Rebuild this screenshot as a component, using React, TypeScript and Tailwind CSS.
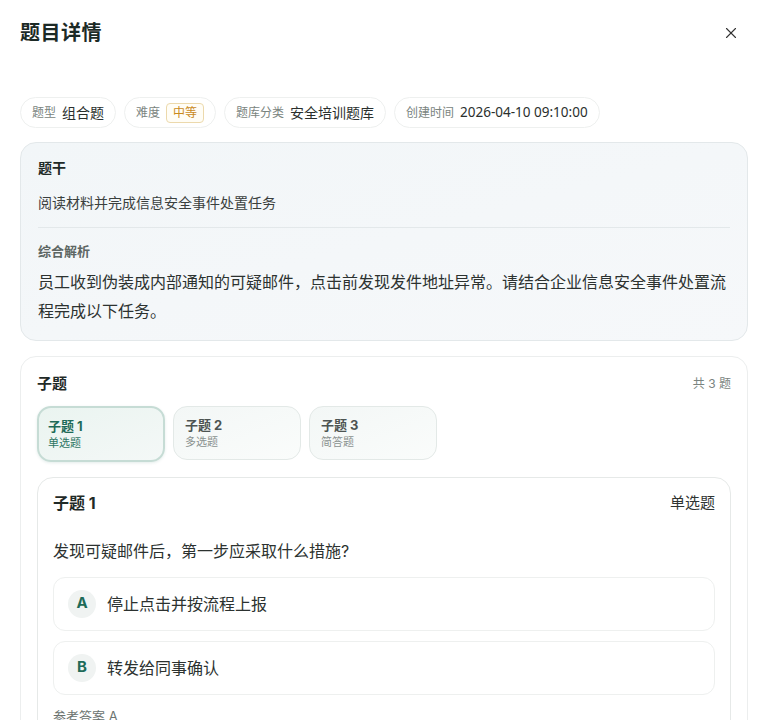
import { X } from 'lucide-react'

type SubQuestion = { no: number; type: string }

const META = [
  { label: '题型', value: '组合题' },
  { label: '难度', value: '中等', badge: true },
  { label: '题库分类', value: '安全培训题库' },
  { label: '创建时间', value: '2026-04-10 09:10:00', mono: true },
]

const SUBS: SubQuestion[] = [
  { no: 1, type: '单选题' },
  { no: 2, type: '多选题' },
  { no: 3, type: '简答题' },
]

const OPTIONS = [
  { key: 'A', text: '停止点击并按流程上报' },
  { key: 'B', text: '转发给同事确认' },
]

export default function App() {
  const active = 1

  return (
    <div className="min-h-[720px] bg-white font-['Inter','Noto_Sans_CJK_SC',sans-serif] text-[#1f2a27]">
      <div className="px-5 pt-[20px] pb-8">
        {/* Header */}
        <div className="flex h-[26px] items-center justify-between">
          <h1 className="text-[20px] font-bold leading-[26px] tracking-[0.5px] text-[#1c2a26]">题目详情</h1>
          <button className="mr-[8px] text-[#333]">
            <X className="h-[18px] w-[18px]" strokeWidth={1.5} />
          </button>
        </div>

        {/* Meta chips */}
        <div className="mt-[51px] flex gap-[8px]">
          {META.map((m) => (
            <div
              key={m.label}
              className="flex h-[31px] items-center gap-[6px] rounded-full border border-[#eef0ef] bg-white px-[11px]"
            >
              <span className="text-[12px] text-[#7a8480]">{m.label}</span>
              {m.badge ? (
                <span className="rounded-[4px] border border-[#ecd9ac] bg-[#fffdf6] px-[6px] text-[12px] leading-[18px] text-[#c98a1c]">
                  {m.value}
                </span>
              ) : (
                <span
                  className={
                    m.mono
                      ? "font-['Noto_Sans','Noto_Sans_CJK_SC',sans-serif] text-[13.5px] text-[#2a2f2d]"
                      : 'text-[14px] text-[#2a2f2d]'
                  }
                >
                  {m.value}
                </span>
              )}
            </div>
          ))}
        </div>

        {/* Stem */}
        <div className="mt-[14px] rounded-[16px] border border-[#e3e8ea] bg-gradient-to-br from-[#f2f6f8] to-[#f6f8fa] px-[17px] pt-[15px] pb-[14px]">
          <div className="text-[14px] font-bold leading-[20px] text-[#1f2a27]">题干</div>
          <p className="mt-[15px] text-[14px] leading-[20px] text-[#3a403e]">阅读材料并完成信息安全事件处置任务</p>
          <div className="mt-[14px] h-px bg-[#e3e8ea]" />
          <div className="mt-[14px] text-[13px] font-bold leading-[18px] text-[#5d6663]">综合解析</div>
          <p className="mt-[8px] text-[16px] leading-[29px] text-[#2c3230]">
            员工收到伪装成内部通知的可疑邮件，点击前发现发件地址异常。请结合企业信息安全事件处置流程完成以下任务。
          </p>
        </div>

        {/* Sub questions */}
        <div className="mt-[15px] rounded-[16px] border border-[#eceeee] bg-white px-[16px] pt-[16px] pb-4">
          <div className="flex items-center justify-between">
            <span className="text-[15px] font-bold leading-[22px] text-[#1f2a27]">子题</span>
            <span className="text-[12px] text-[#7a8480]">共 3 题</span>
          </div>

          <div className="mt-[11px] flex gap-[8px]">
            {SUBS.map((s) =>
              s.no === active ? (
                <div
                  key={s.no}
                  className="flex h-[56px] w-[128px] flex-col justify-center rounded-[14px] border-[2.5px] border-[#c6dcd5] bg-gradient-to-br from-[#eaf4f0] to-[#f4f8f7] px-[9px] shadow-[0_1px_3px_rgba(30,107,88,0.12)]"
                >
                  <span className="text-[13px] font-bold leading-[18px] text-[#1e6b58]">子题 {s.no}</span>
                  <span className="text-[11px] leading-[16px] text-[#2d7563]">{s.type}</span>
                </div>
              ) : (
                <div
                  key={s.no}
                  className="flex h-[54px] w-[128px] flex-col justify-center rounded-[14px] border border-[#e3e9e7] bg-gradient-to-br from-[#f3f7f6] to-[#fafcfb] px-[11px]"
                >
                  <span className="text-[13px] font-bold leading-[18px] text-[#4d5452]">子题 {s.no}</span>
                  <span className="text-[11px] leading-[16px] text-[#8a918f]">{s.type}</span>
                </div>
              )
            )}
          </div>

          {/* Active sub question */}
          <div className="mt-[15px] rounded-[16px] border border-[#e6e9e8] bg-white px-[15px] pt-[14px] pb-4">
            <div className="flex items-center justify-between">
              <span className="text-[16px] font-bold leading-[22px] text-[#1f2a27]">子题 1</span>
              <span className="text-[15px] text-[#2f3432]">单选题</span>
            </div>
            <p className="mt-[25px] text-[16px] leading-[22px] text-[#2c3230]">发现可疑邮件后，第一步应采取什么措施?</p>

            <div className="mt-[15px] flex flex-col gap-[10px]">
              {OPTIONS.map((o) => (
                <div
                  key={o.key}
                  className="flex h-[54px] items-center gap-[11px] rounded-[12px] border border-[#eef0ef] px-[14px]"
                >
                  <span className="flex h-[28px] w-[28px] items-center justify-center rounded-full bg-[#f0f3f2] text-[15px] font-bold text-[#1e6b58]">
                    {o.key}
                  </span>
                  <span className="text-[16px] text-[#2c3230]">{o.text}</span>
                </div>
              ))}
            </div>

            <div className="mt-[12px] text-[13px] text-[#6b7370]">参考答案 A</div>
          </div>
        </div>
      </div>
    </div>
  )
}
